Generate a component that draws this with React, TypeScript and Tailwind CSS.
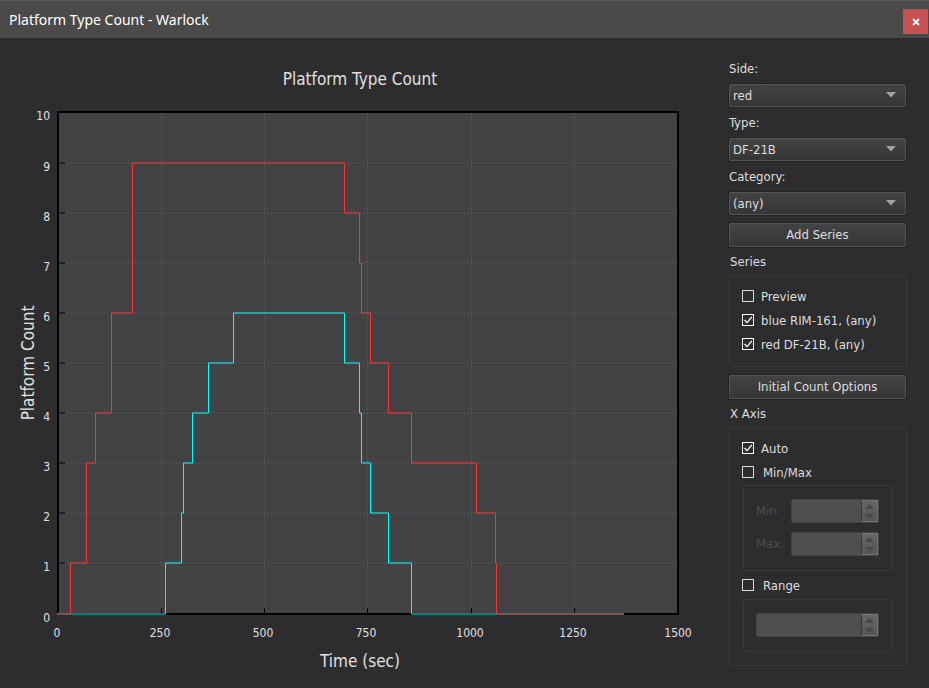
import { useState } from 'react'
import type { ReactNode } from 'react'

type Step = [x: number, count: number]

const redSteps: Step[] = [
  [58, 0],
  [70, 1],
  [86, 3],
  [95, 4],
  [111, 6],
  [132, 9],
  [344, 8],
  [359, 7],
  [361, 6],
  [370, 5],
  [388, 4],
  [411, 3],
  [476, 2],
  [495, 1],
  [496, 0],
]

const blueSteps: Step[] = [
  [58, 0],
  [165, 1],
  [181, 2],
  [183, 3],
  [192, 4],
  [208, 5],
  [233, 6],
  [344, 5],
  [359, 4],
  [361, 3],
  [370, 2],
  [388, 1],
  [411, 0],
]

const xTicks = [
  { x: 161, label: '250' },
  { x: 264, label: '500' },
  { x: 367, label: '750' },
  { x: 471, label: '1000' },
  { x: 574, label: '1250' },
]

const yTicks = [1, 2, 3, 4, 5, 6, 7, 8, 9]

const AXIS_END = 624

function yPos(count: number) {
  return count === 0 ? 576 : 575 - count * 50
}

function stepPath(steps: Step[]) {
  const [first, ...rest] = steps
  let d = `M${first[0] - 1} ${yPos(first[1])}`
  for (const [x, count] of rest) {
    d += `H${x + 0.5}V${yPos(count)}`
  }
  return `${d}H${AXIS_END}`
}

function Chart() {
  return (
    <svg
      viewBox="0 0 718 650"
      className="block h-auto w-full"
      role="img"
      aria-label="Platform Type Count"
    >
      <rect x="58" y="74" width="620" height="502" fill="#434345" />

      {yTicks.map((tick) => (
        <path
          key={tick}
          d={`M59 ${yPos(tick)}H677`}
          stroke="#59595c"
          strokeDasharray="2 2"
        />
      ))}
      {xTicks.map(({ x }) => (
        <path
          key={x}
          d={`M${x + 0.5} 75V575`}
          stroke="#69696b"
          strokeDasharray="1 3"
        />
      ))}

      <rect
        x="58"
        y="74"
        width="620"
        height="502"
        fill="none"
        stroke="#000"
        strokeWidth="2"
      />
      {yTicks.map((tick) => (
        <path key={tick} d={`M59 ${yPos(tick)}h6`} stroke="#000" />
      ))}
      {xTicks.map(({ x }) => (
        <path key={x} d={`M${x + 0.5} 575v-5`} stroke="#000" />
      ))}

      <g fill="none">
        <path d={stepPath(blueSteps)} stroke="#00ffff" />
        <path d={stepPath(redSteps)} stroke="#ff3232" />
        <path d={`M57 576H70M497 576H${AXIS_END}`} stroke="#7d5555" strokeWidth="2" />
        <path d="M71 576H165M412 576H496" stroke="#008080" strokeWidth="2" />
      </g>

      <g fill="#e0e0e0" fontSize="12" textAnchor="end">
        <text x="50" y="82">
          10
        </text>
        {yTicks.map((tick) => (
          <text key={tick} x="50" y={yPos(tick) + 8}>
            {tick}
          </text>
        ))}
        <text x="50" y="584">
          0
        </text>
      </g>
      <g fill="#e0e0e0" fontSize="12" textAnchor="middle">
        <text x="57" y="599">
          0
        </text>
        {xTicks.map(({ x, label }) => (
          <text key={x} x={x - 1} y="599">
            {label}
          </text>
        ))}
        <text x="678" y="599">
          1500
        </text>
      </g>
      <g fill="#e0e0e0" fontSize="17" textAnchor="middle">
        <text x="360" y="47">
          Platform Type Count
        </text>
        <text x="360" y="629">
          Time (sec)
        </text>
        <text transform="translate(34 325) rotate(-90)">Platform Count</text>
      </g>
    </svg>
  )
}

function Select({ label, options }: { label: string; options: string[] }) {
  const id = `select-${label.toLowerCase()}`

  return (
    <div>
      <label htmlFor={id} className="mb-1.5 block h-[18px] leading-[18px]">
        {label}:
      </label>
      <div className="relative">
        <select
          id={id}
          className="block h-[23px] w-full appearance-none rounded-xs border border-[#545456] bg-linear-to-b from-[#434345] to-[#363637] px-[3px] shadow-[0_0_0_1px_#242425] outline-none"
        >
          {options.map((option) => (
            <option key={option} className="bg-[#363637]">
              {option}
            </option>
          ))}
        </select>
        <svg
          viewBox="0 0 10 6"
          className="pointer-events-none absolute top-2 right-[10px] h-1.5 w-2.5"
        >
          <path d="M0 0h10L5 5.500z" fill="#a0a0a2" />
        </svg>
      </div>
    </div>
  )
}

function PushButton({ children }: { children: ReactNode }) {
  return (
    <button
      type="button"
      className="block h-6 w-full rounded-xs border border-[#545456] bg-linear-to-b from-[#434345] to-[#363637] text-center shadow-[0_0_0_1px_#242425] active:from-[#363637]"
    >
      {children}
    </button>
  )
}

type CheckProps = {
  label: string
  checked: boolean
  onChange: (checked: boolean) => void
  wide?: boolean
}

function Check({ label, checked, onChange, wide }: CheckProps) {
  return (
    <label className={wide ? 'flex items-center gap-[9px]' : 'flex items-center gap-[7px]'}>
      <span className="grid pb-0.5">
        <input
          type="checkbox"
          checked={checked}
          onChange={(e) => onChange(e.target.checked)}
          className="peer col-start-1 row-start-1 size-3 appearance-none border border-[#dcdcdc] checked:border-white"
        />
        <svg
          viewBox="0 0 12 12"
          className="pointer-events-none invisible col-start-1 row-start-1 size-3 peer-checked:visible"
        >
          <path
            d="M2.500 6l2.500 2.700L9.800 3"
            fill="none"
            stroke="#fff"
            strokeWidth="1.200"
          />
        </svg>
      </span>
      {label}
    </label>
  )
}

function SpinBox({ id, label }: { id: string; label: string }) {
  return (
    <div className="flex h-6 min-w-0 flex-1 rounded-xs border border-[#434345]">
      <input
        id={id}
        aria-label={label}
        disabled
        className="min-w-0 flex-1 bg-[#4f4f51] px-1"
      />
      <div className="flex w-[17px] flex-col border border-l-[#39393b] border-t-[#747476] border-r-[#747476] border-b-[#747476] bg-linear-to-b from-[#666668] to-[#565658]">
        <button
          type="button"
          disabled
          aria-label={`Increase ${label}`}
          className="grid flex-1 place-items-center"
        >
          <svg viewBox="0 0 9 5" className="h-[5px] w-[9px]">
            <path d="M0 5h9L4.500 0z" fill="#48484a" />
          </svg>
        </button>
        <button
          type="button"
          disabled
          aria-label={`Decrease ${label}`}
          className="grid flex-1 place-items-center"
        >
          <svg viewBox="0 0 9 5" className="h-[5px] w-[9px]">
            <path d="M0 0h9L4.500 5z" fill="#48484a" />
          </svg>
        </button>
      </div>
    </div>
  )
}

export default function App() {
  const [series, setSeries] = useState([
    { label: 'Preview', checked: false },
    { label: 'blue RIM-161, (any)', checked: true },
    { label: 'red DF-21B, (any)', checked: true },
  ])
  const [axis, setAxis] = useState('auto')

  function toggleSeries(label: string, checked: boolean) {
    setSeries(series.map((s) => (s.label === label ? { ...s, checked } : s)))
  }

  return (
    <div className="min-h-screen bg-[#2d2d2f] font-['DejaVu_Sans_Condensed','Noto_Sans',sans-serif] text-[13px] text-[#dedede]">
      <header className="flex h-[38px] items-center justify-between border-t border-[#5a5a59] bg-[#4b4a48] pr-px pl-[9px]">
        <h1 className="font-['Noto_Sans',sans-serif] text-sm text-white">
          Platform Type Count - Warlock
        </h1>
        <button
          type="button"
          aria-label="Close"
          className="mt-1 grid size-[25px] place-items-center bg-[#c75050]"
        >
          <svg viewBox="0 0 8 8" className="size-2">
            <path d="M1 1l6 6M7 1L1 7" stroke="#fff" strokeWidth="1.800" />
          </svg>
        </button>
      </header>

      <main className="flex">
        <div className="min-w-0 flex-1">
          <Chart />
        </div>

        <aside className="w-[211px] shrink-0 pt-[22px] pr-[22px] pb-[22px] pl-[11px]">
          <div className="mr-px flex flex-col gap-[7px]">
            <Select label="Side" options={['red', 'blue']} />
            <Select label="Type" options={['DF-21B', 'RIM-161']} />
            <Select label="Category" options={['(any)']} />
            <div className="pt-px">
              <PushButton>Add Series</PushButton>
            </div>
          </div>

          <h2 className="mt-1.5 h-[18px] pl-px leading-[18px]">Series</h2>
          <div className="mt-1 mb-2 flex flex-col rounded-xs border border-[#3a3a3c] px-3 py-[9px]">
            {series.map(({ label, checked }) => (
              <div key={label} className="flex h-6 items-center">
                <Check
                  label={label}
                  checked={checked}
                  onChange={(value) => toggleSeries(label, value)}
                />
              </div>
            ))}
          </div>

          <div className="mr-px">
            <PushButton>Initial Count Options</PushButton>
          </div>

          <h2 className="mt-1.5 h-[18px] pl-px leading-[18px]">X Axis</h2>
          <div className="mt-1 rounded-xs border border-[#3a3a3c] px-3 pt-[9px] pb-[13px]">
            <div className="flex h-6 items-center">
              <Check
                label="Auto"
                checked={axis === 'auto'}
                onChange={() => setAxis('auto')}
              />
            </div>
            <div className="flex h-6 items-center">
              <Check
                wide
                label="Min/Max"
                checked={axis === 'minmax'}
                onChange={() => setAxis('minmax')}
              />
            </div>
            <div className="mx-px flex flex-col gap-[9px] rounded-xs border border-[#3a3a3c] pt-[13px] pr-[13px] pb-[14px] pl-3">
              <div className="flex items-center">
                <label htmlFor="x-min" className="w-[35px] text-[#4b4b4d]">
                  Min:
                </label>
                <SpinBox id="x-min" label="Minimum" />
              </div>
              <div className="flex items-center">
                <label htmlFor="x-max" className="w-[35px] text-[#4b4b4d]">
                  Max:
                </label>
                <SpinBox id="x-max" label="Maximum" />
              </div>
            </div>
            <div className="flex h-[28px] items-center pt-0.5">
              <Check
                wide
                label="Range"
                checked={axis === 'range'}
                onChange={() => setAxis('range')}
              />
            </div>
            <div className="mx-px flex rounded-xs border border-[#3a3a3c] pt-[13px] pr-[13px] pb-[14px] pl-3">
              <SpinBox id="x-range" label="Range value" />
            </div>
          </div>
        </aside>
      </main>
    </div>
  )
}
